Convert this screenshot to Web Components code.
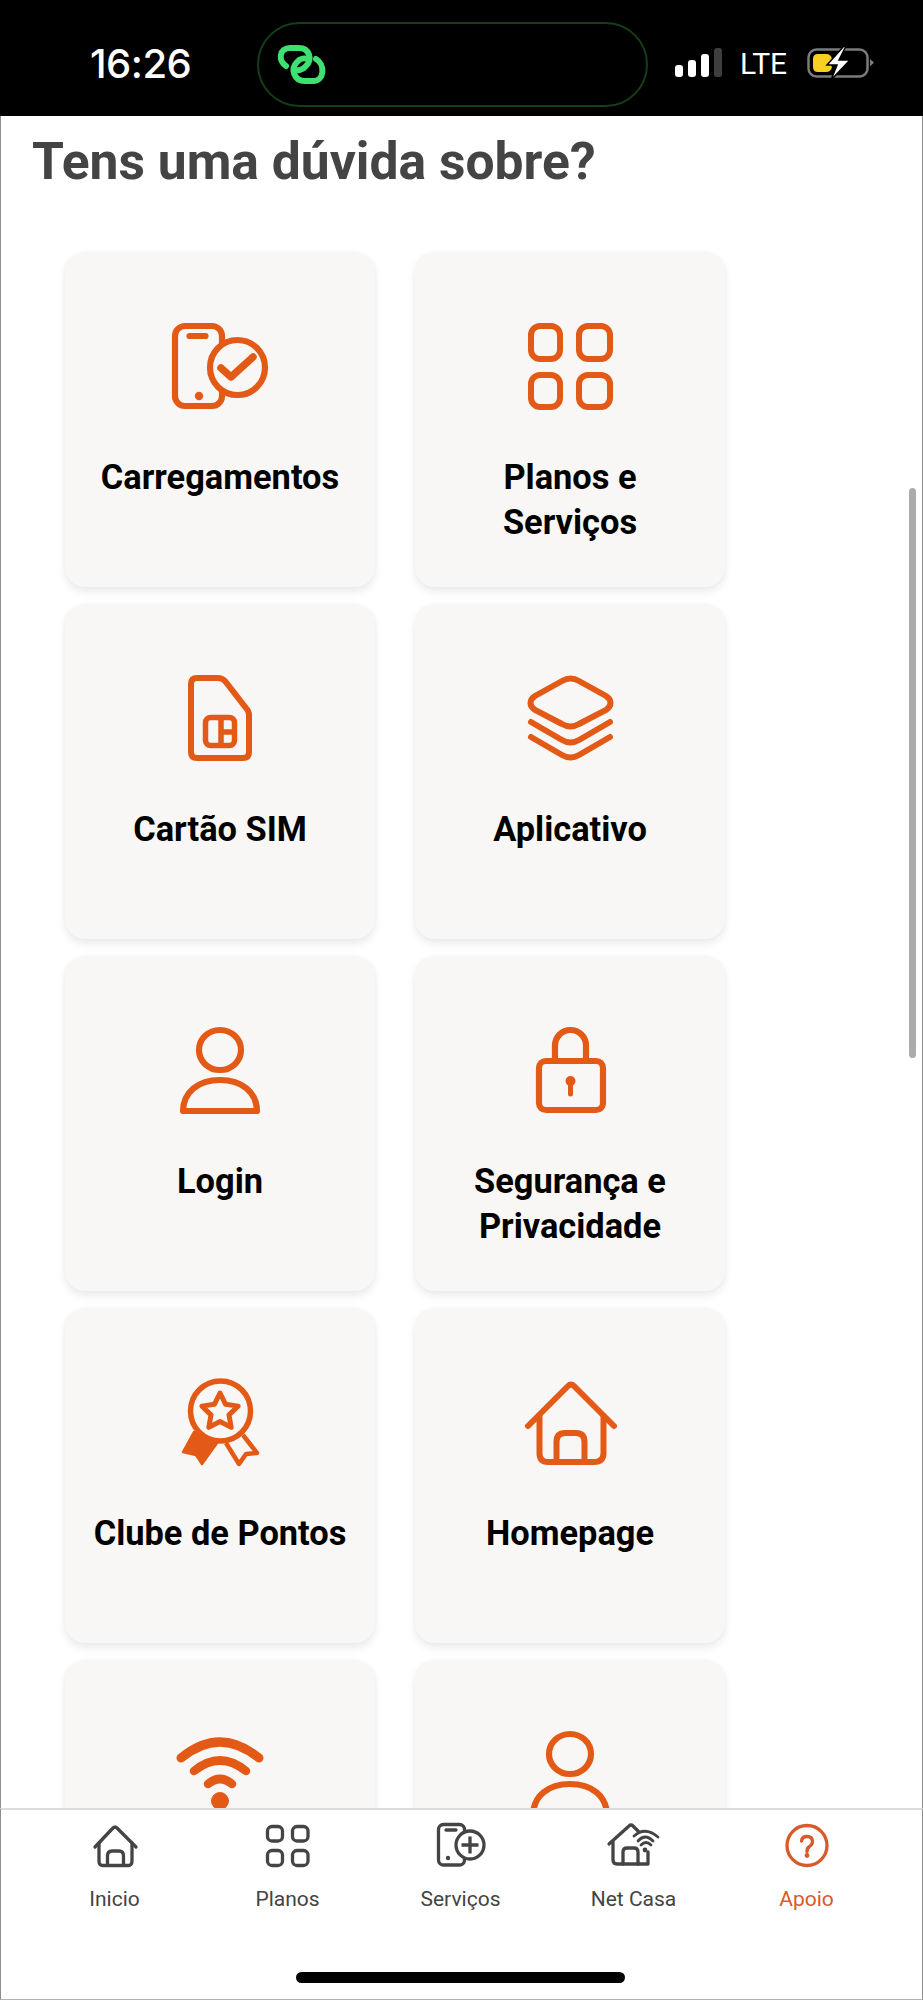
<!DOCTYPE html>
<html lang="pt">
<head>
<meta charset="utf-8">
<title>Apoio</title>
<style>
html,body{margin:0;padding:0;background:#fff;}
body{font-family:Roboto,"Liberation Sans",sans-serif;}
</style>
</head>
<body>
<app-screen>
    <status-bar slot="top"></status-bar>
    <page-title>Tens uma dúvida sobre?</page-title>
    <topic-grid>
        <topic-card icon="phonecheck">Carregamentos</topic-card>
        <topic-card icon="grid">Planos e<br>Serviços</topic-card>
        <topic-card icon="sim">Cartão SIM</topic-card>
        <topic-card icon="layers">Aplicativo</topic-card>
        <topic-card icon="user">Login</topic-card>
        <topic-card icon="lock">Segurança e<br>Privacidade</topic-card>
        <topic-card icon="badge">Clube de Pontos</topic-card>
        <topic-card icon="house">Homepage</topic-card>
        <topic-card icon="wifi"></topic-card>
        <topic-card icon="user"></topic-card>
    </topic-grid>
    <tab-bar slot="bottom">
        <tab-item icon="tabhome">Inicio</tab-item>
        <tab-item icon="tabgrid">Planos</tab-item>
        <tab-item icon="tabphone">Serviços</tab-item>
        <tab-item icon="tabnet">Net Casa</tab-item>
        <tab-item icon="tabhelp" active>Apoio</tab-item>
    </tab-bar>
</app-screen>

<script>
// all icons use stroke=currentColor unless a part says otherwise
const ICONS={
    phonecheck:`<g stroke-width="6.2"><rect x="15" y="3" width="47" height="80" rx="10"/><path d="M29.5 13h16" stroke-linecap="round"/><circle cx="39" cy="73" r="4.2" fill="currentColor" stroke="none"/><circle cx="77.5" cy="44.5" r="27.5" fill="var(--card)"/><path d="M61 45l10 9 22-20" stroke-width="7.5" stroke-linecap="round" stroke-linejoin="round"/></g>`,
    grid:`<g stroke-width="6"><rect x="21" y="3" width="29" height="33" rx="9"/><rect x="69" y="3" width="31" height="33" rx="9"/><rect x="21" y="52" width="29" height="32" rx="9"/><rect x="69" y="52" width="31" height="32" rx="9"/></g>`,
    sim:`<g stroke-width="6"><path d="M37 3H58Q62 3 65 6L86 33Q89 36 89 40V77Q89 83 83 83H37Q31 83 31 77V9Q31 3 37 3Z"/><rect x="45.5" y="42.5" width="29" height="28" rx="5" stroke-width="5.5"/><path d="M61 43v27M61 57h13" stroke-width="5.5"/></g>`,
    layers:`<g stroke-width="6" stroke-linecap="round"><path d="M52 6Q60.5 1 69 6L96 21Q100.5 24 100.5 28Q100.5 32 96 35L69 49Q60.5 54 52 49L25 35Q20.5 32 20.5 28Q20.5 24 25 21Z"/><path d="M21 47L52 65Q60.5 70 69 65L100 47"/><path d="M21 62L52 80Q60.5 85 69 80L100 62"/></g>`,
    user:`<g stroke-width="6.2"><ellipse cx="60" cy="23" rx="21" ry="20"/><path d="M23 84H97C96.5 65 82 53 60 53C38 53 23.5 65 23 84Z" stroke-linejoin="round"/></g>`,
    lock:`<g stroke-width="6.2"><rect x="29" y="34" width="64" height="49" rx="7"/><path d="M45 33V18.5A15.5 15.5 0 0 1 76 18.5V33"/><circle cx="60.5" cy="54" r="5" fill="currentColor" stroke="none"/><path d="M60.5 55V67" stroke-width="5" stroke-linecap="round"/></g>`,
    badge:`<g stroke-width="5.5"><circle cx="60.5" cy="32" r="30"/><path stroke-width="5" stroke-linejoin="round" d="M60 14L65.6 25.3L78.1 27.1L69 35.9L71.2 48.4L60 42.5L48.8 48.4L51 35.9L41.9 27.1L54.4 25.3Z"/><path d="M34 53L23 73L36 76L42 85L57 64Z" fill="currentColor" stroke="currentColor" stroke-width="2.5" stroke-linejoin="round"/><path d="M83 56L97 74L86 75L79 85L66 64" stroke-width="4.5" stroke-linejoin="round"/></g>`,
    house:`<g stroke-width="6" stroke-linecap="round" stroke-linejoin="round"><path d="M18 47L58 7Q61 4 64 7L104 47"/><path d="M29.5 37V74Q29.5 83 38 83H84Q93.5 83 93.5 74V37"/><path d="M46.5 83V63Q46.5 54 55 54H66Q74.5 54 74.5 63V83"/></g>`,
    wifi:`<g stroke-linecap="round"><path d="M21 27Q60 -5 99 27" stroke-width="9"/><path d="M34 40Q60 19 86 40" stroke-width="8.5"/><path d="M48 53Q60 43 72 53" stroke-width="8.5"/><circle cx="60" cy="70" r="8.5" fill="currentColor"/></g>`,
    tabhome:`<g stroke-width="3.3" stroke-linecap="round" stroke-linejoin="round"><path d="M10 25L28 6Q30 4 32 6L51 25"/><path d="M14 21V39Q14 43.5 18 43.5H43Q47 43.5 47 39V21"/><path d="M22.5 43V34Q22.5 29 27 29H34Q38.5 29 38.5 34V43"/></g>`,
    tabgrid:`<g stroke-width="3.3"><rect x="9.5" y="4.5" width="15" height="14.5" rx="4.5"/><rect x="34.5" y="4.5" width="15.5" height="14.5" rx="4.5"/><rect x="9.5" y="28.5" width="15" height="15" rx="4.5"/><rect x="34.5" y="28.5" width="15.5" height="15" rx="4.5"/></g>`,
    tabphone:`<g stroke-width="3.3"><rect x="7.5" y="2.5" width="26" height="40.5" rx="5"/><path d="M15 8h10" stroke-linecap="round"/><circle cx="17" cy="36" r="2.2" fill="currentColor" stroke="none"/><circle cx="39" cy="23" r="14" fill="#fff"/><path d="M39 14.5v17M30.5 23h17"/></g>`,
    tabnet:`<g stroke-width="3.3" stroke-linecap="round" stroke-linejoin="round"><path d="M5 22L25 4Q27 2 29 4L35 10"/><path d="M9 20V38Q9 42 13 42H44V30"/><path d="M19 42V30Q19 26 23 26H30Q34 26 34 30V42"/><path d="M30 14Q41 4 54 15" stroke-width="2.8"/><path d="M34 19Q41 11 49 19" stroke-width="2.8"/><path d="M37 23Q42 18 47 23" stroke-width="2.8"/><circle cx="41" cy="28" r="2.4" fill="currentColor" stroke="none"/></g>`,
    tabhelp:`<g stroke-width="3.3"><circle cx="30" cy="23.5" r="20"/><path d="M24.5 19Q25 14.5 30 14.5Q35.5 14.5 35.5 19.5Q35.5 22.5 32.5 24.5Q30 26 30 29.5" stroke-linecap="round"/><circle cx="30" cy="33.5" r="2.4" fill="currentColor" stroke="none"/></g>`
};

class UiIcon extends HTMLElement{
    constructor(){
        super();
        const w=this.getAttribute('w')||120;
        const h=this.getAttribute('h')||90;
        this.attachShadow({mode:'open'});
        this.shadowRoot.innerHTML=`
            <style>
            :host{display:block;width:${w}px;height:${h}px;}
            svg{display:block;overflow:visible;}
            </style>
            <svg width="${w}" height="${h}" viewBox="0 0 ${w} ${h}" fill="none" stroke="currentColor">${ICONS[this.getAttribute('name')]||''}</svg>`;
    }
}
customElements.define('ui-icon',UiIcon);

class AppScreen extends HTMLElement{
    constructor(){
        super();
        this.attachShadow({mode:'open'});
        this.shadowRoot.innerHTML=`
            <style>
            :host{display:flex;flex-direction:column;width:923px;height:2000px;overflow:hidden;background:#fff;}
            .middle{flex:1;min-height:0;position:relative;overflow:hidden;border-left:1px solid #8e8e8e;border-right:1px solid #8e8e8e;}
            .thumb{position:absolute;left:908px;top:372px;width:7px;height:570px;border-radius:4px;background:#ababab;}
            </style>
            <slot name="top"></slot>
            <section class="middle">
                <slot></slot>
                <div class="thumb"></div>
            </section>
            <slot name="bottom"></slot>`;
    }
}
customElements.define('app-screen',AppScreen);

class StatusBar extends HTMLElement{
    constructor(){
        super();
        this.attachShadow({mode:'open'});
        this.shadowRoot.innerHTML=`
            <style>
            :host{display:flex;align-items:center;height:116px;background:#000;color:#fff;font-family:Inter,"Liberation Sans",sans-serif;box-sizing:border-box;padding-left:90px;flex:none;}
            .time{width:167px;font-size:40px;font-weight:500;letter-spacing:-.5px;line-height:40px;margin-top:11px;flex:none;}
            .island{width:391px;height:85px;box-sizing:border-box;border:2.5px solid #143f19;border-radius:43px;margin-top:13px;display:flex;align-items:center;padding-left:18px;flex:none;}
            .signal{display:flex;align-items:flex-end;gap:5px;margin-left:27px;margin-top:9px;height:29px;}
            .signal i{display:block;width:8px;border-radius:3px;background:#fff;}
            .lte{font-size:30px;font-family:Roboto,sans-serif;margin-left:18px;margin-top:11px;line-height:30px;}
            .batt{margin-left:20px;margin-top:9px;display:block;}
            </style>
            <span class="time">16:26</span>
            <div class="island">
                <svg width="50" height="40" viewBox="0 0 50 40" fill="none" stroke="#3fe072" stroke-width="6" stroke-linecap="round">
                    <path d="M9 21C1 16 2 3 13 3H22C32 3 36 14 29 21C26 25 20 26 17 25"/>
                    <path d="M39 14C48 19 48 36 36 36H28C17 36 13 24 20 17C23 13 28 13 31 14"/>
                </svg>
            </div>
            <div class="signal"><i style="height:12px"></i><i style="height:17px"></i><i style="height:23px"></i><i style="height:29px;background:#3e3e3e"></i></div>
            <span class="lte">LTE</span>
            <svg class="batt" width="68" height="32" viewBox="0 0 68 32" fill="none">
                <rect x="1.5" y="2.5" width="59" height="27" rx="8" stroke="#7b7b7b" stroke-width="2.5"/>
                <path d="M63 12l4 3.5-4 4z" fill="#7b7b7b"/>
                <path d="M11 7h8q5 0 6 5-3 4 0 8-1 5-6 5h-8q-5 0-5-5V12q0-5 5-5z" fill="#f7d021"/>
                <path d="M37 -1L20 18h10l-6 15 19-20h-11l7-14z" fill="#fff" stroke="#000" stroke-width="1.5"/>
            </svg>`;
    }
}
customElements.define('status-bar',StatusBar);

class PageTitle extends HTMLElement{
    constructor(){
        super();
        this.attachShadow({mode:'open'});
        this.shadowRoot.innerHTML=`
            <style>
            :host{display:block;height:136px;box-sizing:border-box;padding:15px 0 0 31px;color:#444;font-size:51.6px;font-weight:700;line-height:62px;}
            </style>
            <slot></slot>`;
    }
}
customElements.define('page-title',PageTitle);

class TopicGrid extends HTMLElement{
    constructor(){
        super();
        this.attachShadow({mode:'open'});
        this.shadowRoot.innerHTML=`
            <style>
            :host{display:grid;grid-template-columns:310px 310px;grid-auto-rows:335px;column-gap:40px;row-gap:17px;padding-left:64px;}
            </style>
            <slot></slot>`;
    }
}
customElements.define('topic-grid',TopicGrid);

class TopicCard extends HTMLElement{
    constructor(){
        super();
        this.attachShadow({mode:'open'});
        this.shadowRoot.innerHTML=`
            <style>
            :host{--card:#f9f7f6;display:flex;flex-direction:column;align-items:center;box-sizing:border-box;padding-top:71px;background:var(--card);border-radius:20px;box-shadow:0 5px 10px rgba(0,0,0,.08),0 0 4px rgba(0,0,0,.03);}
            ui-icon{color:#e35a17;flex:none;}
            .label{margin-top:42px;color:#000;font-size:34.4px;font-weight:700;line-height:45px;text-align:center;}
            </style>
            <ui-icon name="${this.getAttribute('icon')}"></ui-icon>
            <div class="label"><slot></slot></div>`;
    }
}
customElements.define('topic-card',TopicCard);

class TabBar extends HTMLElement{
    constructor(){
        super();
        this.attachShadow({mode:'open'});
        this.shadowRoot.innerHTML=`
            <style>
            :host{display:flex;flex-direction:column;height:192px;box-sizing:border-box;flex:none;background:#fff;border-top:2px solid #dcdcdc;border-left:1px solid #8e8e8e;border-right:1px solid #8e8e8e;border-bottom:1px solid #b5b5b5;}
            .tabs{display:grid;grid-template-columns:repeat(5,173px);padding:12px 0 0 27px;}
            .home{width:329px;height:11px;border-radius:6px;background:#000;margin:auto auto 16px 295px;}
            </style>
            <div class="tabs"><slot></slot></div>
            <div class="home"></div>`;
    }
}
customElements.define('tab-bar',TabBar);

class TabItem extends HTMLElement{
    constructor(){
        super();
        this.attachShadow({mode:'open'});
        this.shadowRoot.innerHTML=`
            <style>
            :host{display:flex;flex-direction:column;align-items:center;color:#444;font-size:21px;line-height:28px;}
            :host([active]){color:#d9592a;}
            .label{margin-top:13px;}
            </style>
            <ui-icon name="${this.getAttribute('icon')}" w="60" h="50"></ui-icon>
            <div class="label"><slot></slot></div>`;
    }
}
customElements.define('tab-item',TabItem);
</script>
</body>
</html>
